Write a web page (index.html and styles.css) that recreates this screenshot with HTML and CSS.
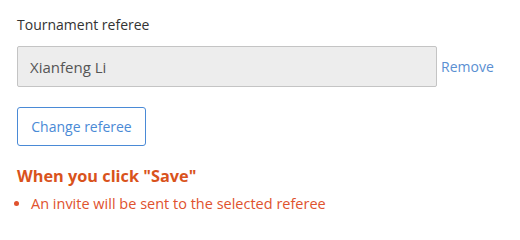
FILE: index.html
```html
<!DOCTYPE html>
<html>
<head>
<meta charset="utf-8">
<link rel="stylesheet" href="styles.css">
</head>
<body>
<div class="panel">
  <div class="label">Tournament referee</div>
  <div class="field-row">
    <div class="field">Xianfeng Li</div>
    <a class="remove" href="#">Remove</a>
  </div>
  <button class="btn">Change referee</button>
  <h3 class="notice-title">When you click "Save"</h3>
  <ul class="notice-list">
    <li>An invite will be sent to the selected referee</li>
  </ul>
</div>
</body>
</html>
```
FILE: styles.css
```css
* { box-sizing: border-box; }
html, body { margin: 0; padding: 0; background: #fff; }
body { font-family: "Open Sans", Lato, sans-serif; }
.panel { padding: 15px 17px 0 17px; }
.label { font-size: 14px; color: #333; line-height: 20px; }
.field-row { display: flex; align-items: center; margin-top: 11px; }
.field {
  width: 420px; height: 41px;
  background: #ededed; border: 1px solid #c4c4c4; border-radius: 2px;
  padding: 0 12px; display: flex; align-items: center;
  font-size: 15px; color: #555;
}
.remove { margin-left: 4px; font-size: 14px; color: #5a8fd2; text-decoration: none; }
.btn {
  display: block; margin-top: 20px;
  width: 129px; height: 39px;
  border: 1px solid #4a8ad6; border-radius: 3px; background: #fff;
  font-family: inherit; font-size: 14px; color: #4a8ad6; padding: 0;
}
.notice-title { margin: 19px 0 0 0; font-size: 16.3px; font-weight: 700; color: #d9531c; line-height: 22px; }
.notice-list { margin: 7px 0 0 0; padding: 0 0 0 14px; color: #e0522e; font-size: 14.5px; line-height: 20px; }
.notice-list li { padding-left: 0; }
```
